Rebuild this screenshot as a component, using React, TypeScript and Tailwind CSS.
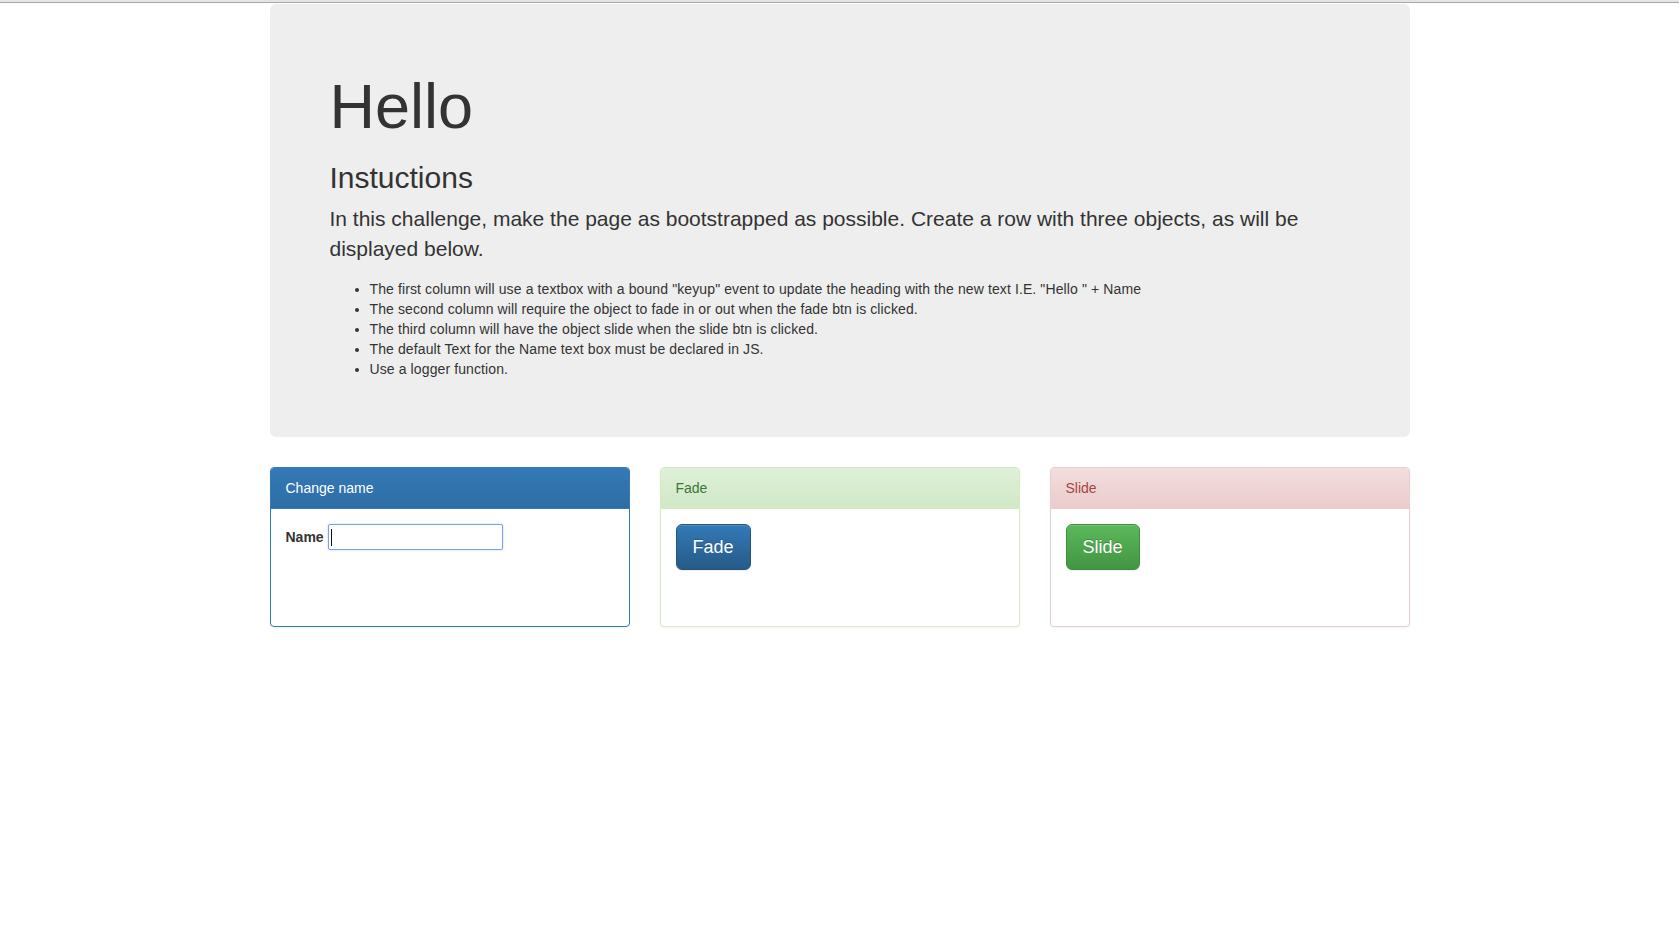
import React from 'react'

const instructions = [
  'The first column will use a textbox with a bound "keyup" event to update the heading with the new text I.E. "Hello " + Name',
  'The second column will require the object to fade in or out when the fade btn is clicked.',
  'The third column will have the object slide when the slide btn is clicked.',
  'The default Text for the Name text box must be declared in JS.',
  'Use a logger function.',
]

const btnBase =
  'px-4 py-2.5 text-[18px] leading-[24px] rounded-[6px] border text-white bg-linear-to-b shadow-[inset_0_1px_0_rgba(255,255,255,.15),0_1px_1px_rgba(0,0,0,.075)] [text-shadow:0_-1px_0_rgba(0,0,0,.2)]'

export default function App() {
  return (
    <div className="min-h-screen bg-white font-['Liberation_Sans',Arial,sans-serif] text-[14px] leading-[20px] text-[#333]">
      {/* browser edge */}
      <div className="h-[2px] bg-[#e4e4e4]" />
      <div className="h-px bg-[#a9a9a9]" />

      <div className="w-[1170px] mx-auto px-[15px] pt-px">
        {/* jumbotron */}
        <div className="rounded-[6px] bg-[#eee] pt-12 pb-12 px-[60px] mb-[30px]">
          <h1 className="text-[63px] leading-[1.1] font-medium mt-5 mb-2.5">Hello</h1>
          <h2 className="text-[30px] leading-[1.1] font-medium mt-5 mb-2.5">Instuctions</h2>
          <p className="text-[21px] leading-[30px] font-extralight mb-[15px]">
            In this challenge, make the page as bootstrapped as possible. Create a row with three objects, as will be
            displayed below.
          </p>
          <ul className="list-disc pl-10 mb-2.5 tracking-[0.11px]">
            {instructions.map((t) => (
              <li key={t}>{t}</li>
            ))}
          </ul>
        </div>

        <div className="grid grid-cols-3 gap-[30px]">
          {/* change name */}
          <div className="rounded-[4px] border border-[#337ab7] bg-white shadow-[0_1px_2px_rgba(0,0,0,.05)]">
            <div className="px-[15px] py-[10px] rounded-t-[3px] border-b border-[#337ab7] bg-linear-to-b from-[#337ab7] to-[#2e6da4] text-white">
              Change name
            </div>
            <div className="p-[15px] h-[117px]">
              <div className="flex items-center">
                <label className="font-bold mr-1">Name</label>
                <div className="relative w-[175px] h-[26px] rounded-[2px] border border-[#7ba2e4] bg-white shadow-[0_0_2px_rgba(90,140,230,.45)]">
                  <span className="absolute left-[2px] top-[4px] w-px h-[17px] bg-[#111]" />
                </div>
              </div>
            </div>
          </div>

          {/* fade */}
          <div className="rounded-[4px] border border-[#d6e9c6] bg-white shadow-[0_1px_2px_rgba(0,0,0,.05)]">
            <div className="px-[15px] py-[10px] rounded-t-[3px] border-b border-[#d6e9c6] bg-linear-to-b from-[#dff0d8] to-[#d0e9c6] text-[#3c763d]">
              Fade
            </div>
            <div className="p-[15px] h-[117px]">
              <button className={`${btnBase} border-[#245580] from-[#337ab7] to-[#265a88]`}>Fade</button>
            </div>
          </div>

          {/* slide */}
          <div className="rounded-[4px] border border-[#ebccd1] bg-white shadow-[0_1px_2px_rgba(0,0,0,.05)]">
            <div className="px-[15px] py-[10px] rounded-t-[3px] border-b border-[#ebccd1] bg-linear-to-b from-[#f2dede] to-[#ebcccc] text-[#a94442]">
              Slide
            </div>
            <div className="p-[15px] h-[117px]">
              <button className={`${btnBase} border-[#3e8f3e] from-[#5cb85c] to-[#419641]`}>Slide</button>
            </div>
          </div>
        </div>
      </div>
    </div>
  )
}
